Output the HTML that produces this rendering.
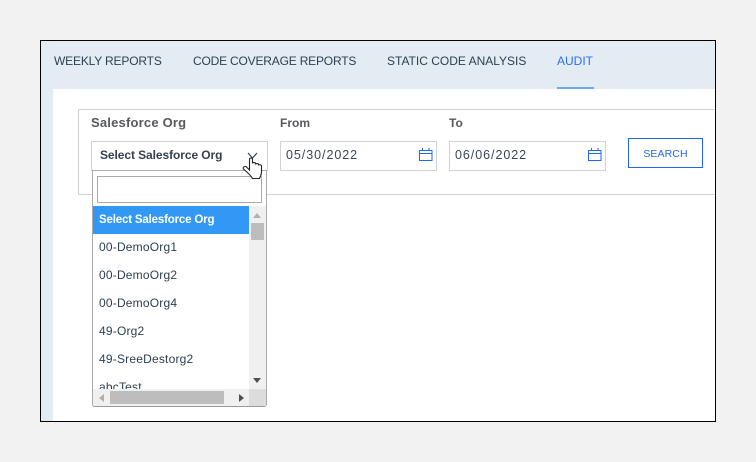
<!DOCTYPE html>
<html><head><meta charset="utf-8"><style>
*{box-sizing:border-box}
html,body{margin:0;padding:0;width:756px;height:462px;overflow:hidden;background:#f2f2f2;font-family:"Liberation Sans",sans-serif}
.a{position:absolute;white-space:nowrap}
#f{position:absolute;left:40px;top:40px;width:676px;height:382px;border:1px solid #000;background:#e3ebf3;overflow:hidden}
#s{position:absolute;left:53px;top:89px;width:662px;height:332px;background:#fff}
.t{top:53px;font-size:12px;line-height:16px;color:#2f3f4f}
.i{border:1px solid #cfd2d8;background:#fff;height:30px;top:141px}
.d{font-size:12.5px;color:#3a4654;top:147px;line-height:16px;letter-spacing:.95px}
.l{font-weight:bold;color:#57595c;font-size:12px;line-height:16px}
.o{left:99px;font-size:12px;line-height:16px;color:#2c3e50;letter-spacing:.2px}
</style></head><body>
<div id="f"></div><div id="s"></div>
<div class="a t" style="left:54px;letter-spacing:-.17px">WEEKLY REPORTS</div>
<div class="a t" style="left:193px;letter-spacing:-.19px">CODE COVERAGE REPORTS</div>
<div class="a t" style="left:387px">STATIC CODE ANALYSIS</div>
<div class="a t" style="left:557px;color:#2f6df0">AUDIT</div>
<div class="a" style="left:557px;top:87px;width:37px;height:2px;background:#6ea6f0"></div>

<div class="a" style="left:78px;top:109px;width:637px;height:86px;border:1px solid #cfd2d8;border-right:0"></div>
<div class="a l" style="left:91px;top:115px;font-size:13px;letter-spacing:.2px">Salesforce Org</div>
<div class="a l" style="left:280px;top:115px">From</div>
<div class="a l" style="left:449px;top:115px">To</div>

<div class="a i" style="left:91px;width:177px"></div>
<div class="a" style="left:100px;top:147px;font-size:12px;line-height:16px;font-weight:bold;color:#34414f;letter-spacing:-.08px">Select Salesforce Org</div>

<div class="a i" style="left:280px;width:157px"></div>
<div class="a d" style="left:286px">05/30/2022</div>
<div class="a i" style="left:449px;width:157px"></div>
<div class="a d" style="left:455px">06/06/2022</div>
<svg class="a" style="left:419px;top:148px" width="14" height="13" viewBox="0 0 14 13"><path d="M.5 2.500h12.500v10H.5zM.5 5.500h12.500M3.500 0v3M10 0v3" fill="none" stroke="#1f66f2"/></svg>
<svg class="a" style="left:588px;top:148px" width="14" height="13" viewBox="0 0 14 13"><path d="M.5 2.500h12.500v10H.5zM.5 5.500h12.500M3.500 0v3M10 0v3" fill="none" stroke="#1f66f2"/></svg>
<div class="a" style="left:628px;top:138px;width:75px;height:30px;border:1px solid #1f66f2;color:#2468f0;font-size:10.5px;line-height:30px;text-align:center;letter-spacing:.1px">SEARCH</div>

<div class="a" style="left:92px;top:170px;width:175px;height:237px;border:1px solid #aaa;border-bottom-color:#999;border-radius:0 0 3px 3px;background:#fff;overflow:hidden">
<div class="a" style="left:4px;top:5px;width:165px;height:27px;border:1px solid #aaa;background:#fff"></div>
<div class="a" style="left:0;top:35px;width:156px;height:28px;background:#3298f5"></div>
<div class="a" style="left:156px;top:35px;width:17px;height:183px;background:#f0f0f0"></div>
<div class="a" style="left:158px;top:52px;width:13px;height:17px;background:#bdbdbd"></div>
<div class="a" style="left:0;top:218px;width:173px;height:18px;background:#f0f0f0"></div>
<div class="a" style="left:17px;top:220px;width:114px;height:13px;background:#bdbdbd"></div>
<div class="a" style="left:156px;top:218px;width:17px;height:18px;background:#dcdcdc"></div>
<div class="a" style="left:160px;top:42px;border:4px solid transparent;border-top:0;border-bottom:5px solid #b0b0b0"></div>
<div class="a" style="left:160px;top:207px;border:4px solid transparent;border-bottom:0;border-top:5px solid #505050"></div>
<div class="a" style="left:6px;top:223px;border:4px solid transparent;border-left:0;border-right:5px solid #b0b0b0"></div>
<div class="a" style="left:146px;top:223px;border:4px solid transparent;border-right:0;border-left:5px solid #505050"></div>
</div>

<div class="a o" style="top:212px;color:#fff;font-weight:bold;font-size:11.5px;letter-spacing:-.17px">Select Salesforce Org</div>
<div class="a o" style="top:239px">00-DemoOrg1</div>
<div class="a o" style="top:267px">00-DemoOrg2</div>
<div class="a o" style="top:295px">00-DemoOrg4</div>
<div class="a o" style="top:323px">49-Org2</div>
<div class="a o" style="top:351px">49-SreeDestorg2</div>
<div class="a" style="left:93px;top:376px;width:156px;height:13px;overflow:hidden"><div class="a o" style="left:6px;top:3px">abcTest</div></div>

<svg class="a" style="left:240px;top:148px" width="30" height="36" viewBox="0 0 30 36"><path d="M8 5l4.500 5 4.500-5" fill="none" stroke="#3a4654" stroke-width="1.200"/><path d="M9.500 22V11.500c0-2 3-2 3 0V15.500c0-1.300 3-1.300 3 0v1c0-1.200 3-1.200 3 0v1c0-1.200 3-1 3 .5v6c0 3-1 4-2 6.500h-7c-1-2-5-6-9-9.500-1-1.500 1-3 2.500-2.500z" fill="#fff" stroke="#222" stroke-width="1.100"/></svg>
</body></html>
